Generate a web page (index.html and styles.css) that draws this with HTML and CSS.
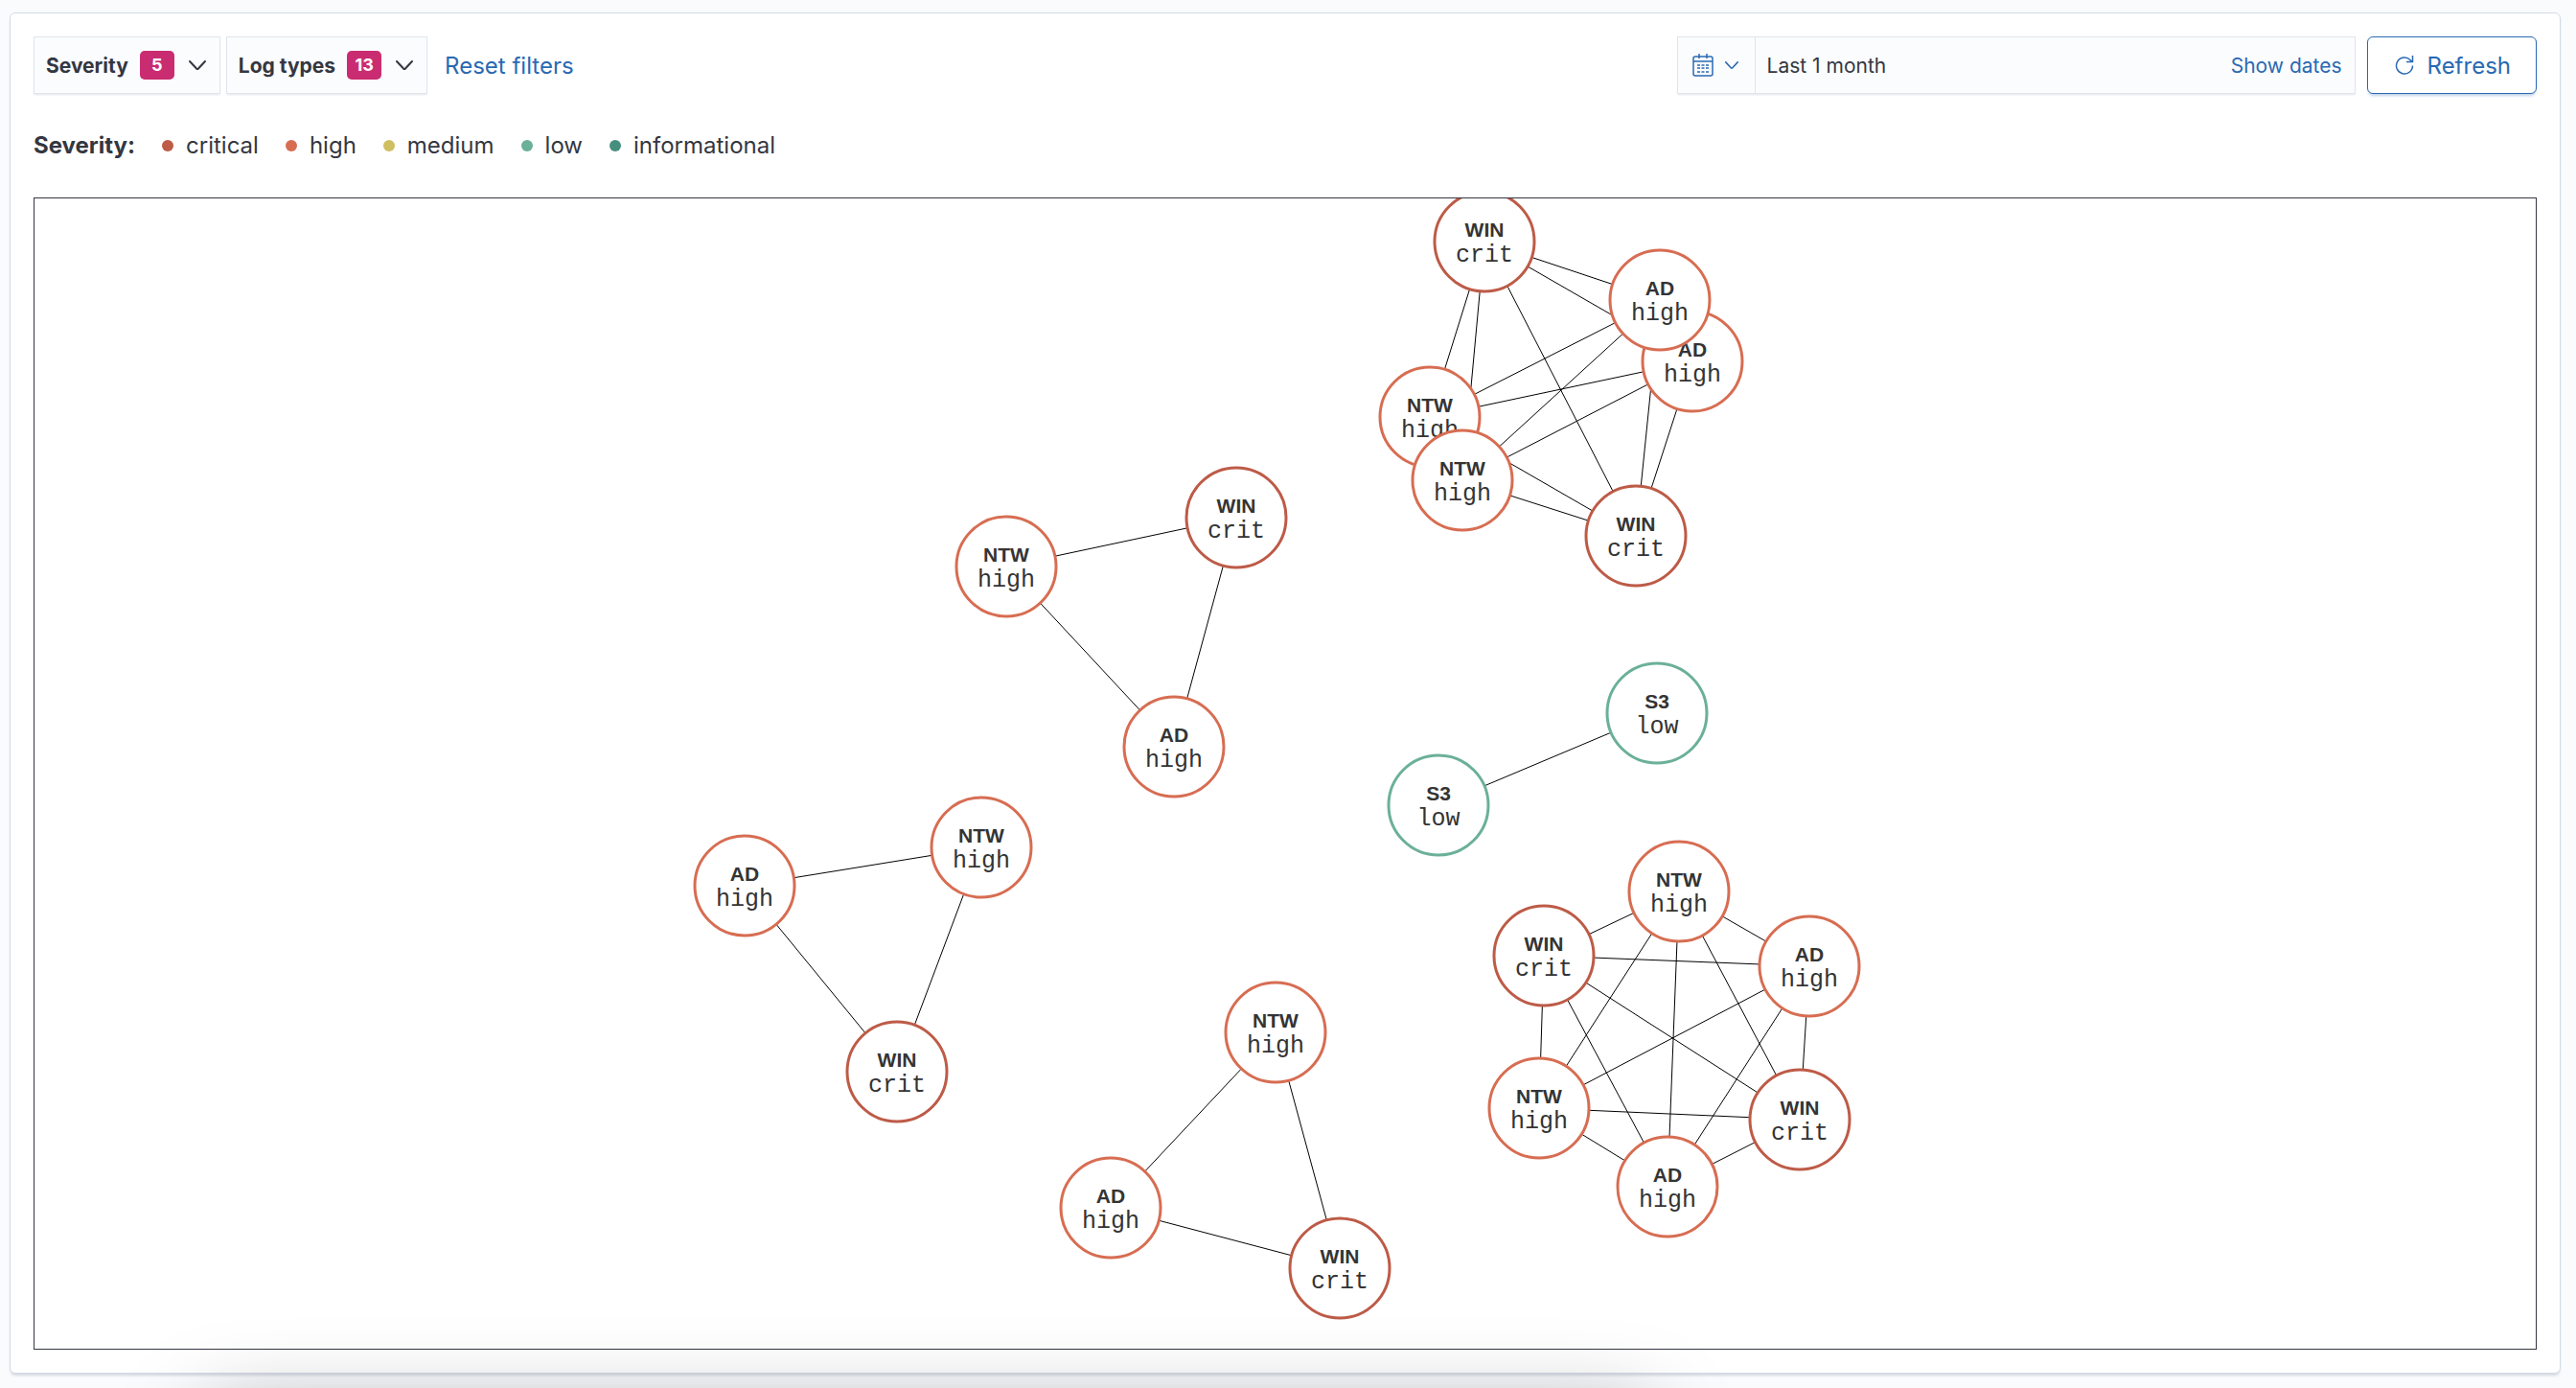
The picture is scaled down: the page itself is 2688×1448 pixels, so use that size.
FILE: index.html
```
<!DOCTYPE html>
<html lang="en">
<head>
    <meta charset="UTF-8">
    <meta name="viewport" content="width=device-width, initial-scale=1.0">
    <title>Correlations</title>
    <link rel="stylesheet" href="styles.css">
</head>
<body>

    <main class="panel">
        <div class="toolbar">
            <div class="filters">
                <button type="button" class="filter-button">
                    Severity <span class="badge">5</span>
                    <svg class="chevron" viewBox="0 0 18 12"><path d="M1 2l7 7.500q1 1 2 0l7-7.500"/></svg>
                </button>
                <button type="button" class="filter-button">
                    Log types <span class="badge">13</span>
                    <svg class="chevron" viewBox="0 0 18 12"><path d="M1 2l7 7.500q1 1 2 0l7-7.500"/></svg>
                </button>
                <button type="button" class="link-button reset">Reset filters</button>
            </div>
            <div class="time">
                <div class="date-picker">
                    <button type="button" class="quick-select" aria-label="Date quick select">
                        <svg class="calendar" viewBox="0 0 22 24">
                            <rect x="1" y="3" width="20" height="20" rx="2"/>
                            <path d="M1 8h20M7 0v5M15 0v5"/>
                            <path class="days" d="M5 12h12M5 15h12M5 19h12"/>
                        </svg>
                        <svg class="chevron small" viewBox="0 0 18 12"><path d="M1 2l7 7.500q1 1 2 0l7-7.500"/></svg>
                    </button>
                    <button type="button" class="range">Last 1 month</button>
                    <button type="button" class="link-button show-dates">Show dates</button>
                </div>
                <button type="button" class="refresh-button">
                    <svg class="refresh-icon" viewBox="0 0 20 20"><path d="M18.500 10.500A8.500 8.500 0 1 1 16 4.500L18 6.500M18.500 0v6.500H12"/></svg>
                    Refresh
                </button>
            </div>
        </div>

        <div class="legend">
            <strong>Severity:</strong>
            <span class="legend-item critical">critical</span>
            <span class="legend-item high">high</span>
            <span class="legend-item medium">medium</span>
            <span class="legend-item low">low</span>
            <span class="legend-item informational">informational</span>
        </div>

        <div class="graph">
            <svg viewBox="0 0 2610 1200">
                <g class="edges">
                    <path d="M1513 45L1696 106M1513 45L1730 170M1513 45L1456 228M1513 45L1490 294M1513 45L1671 352"/>
                    <path d="M1696 106L1730 170M1696 106L1456 228M1696 106L1490 294M1696 106L1671 352"/>
                    <path d="M1730 170L1456 228M1730 170L1490 294M1730 170L1671 352"/>
                    <path d="M1456 228L1490 294M1456 228L1671 352M1490 294L1671 352"/>
                    <path d="M1014 384L1254 333L1189 572Z"/>
                    <path d="M1465 633L1693 537"/>
                    <path d="M741 717L988 677L900 911Z"/>
                    <path d="M1295 870L1123 1053L1362 1116Z"/>
                    <path d="M1716 723L1852 801M1716 723L1842 961M1716 723L1704 1031M1716 723L1570 949M1716 723L1575 790"/>
                    <path d="M1852 801L1842 961M1852 801L1704 1031M1852 801L1570 949M1852 801L1575 790"/>
                    <path d="M1842 961L1704 1031M1842 961L1570 949M1842 961L1575 790"/>
                    <path d="M1704 1031L1570 949M1704 1031L1575 790M1570 949L1575 790"/>
                </g>

                <g class="node critical" transform="translate(1513 45)"><circle r="52"/><text class="type" y="-5">WIN</text><text class="level" y="21">crit</text></g>
                <g class="node high" transform="translate(1730 170)"><circle r="52"/><text class="type" y="-5">AD</text><text class="level" y="21">high</text></g>
                <g class="node high" transform="translate(1696 106)"><circle r="52"/><text class="type" y="-5">AD</text><text class="level" y="21">high</text></g>
                <g class="node high" transform="translate(1456 228)"><circle r="52"/><text class="type" y="-5">NTW</text><text class="level" y="21">high</text></g>
                <g class="node high" transform="translate(1490 294)"><circle r="52"/><text class="type" y="-5">NTW</text><text class="level" y="21">high</text></g>
                <g class="node critical" transform="translate(1671 352)"><circle r="52"/><text class="type" y="-5">WIN</text><text class="level" y="21">crit</text></g>

                <g class="node high" transform="translate(1014 384)"><circle r="52"/><text class="type" y="-5">NTW</text><text class="level" y="21">high</text></g>
                <g class="node critical" transform="translate(1254 333)"><circle r="52"/><text class="type" y="-5">WIN</text><text class="level" y="21">crit</text></g>
                <g class="node high" transform="translate(1189 572)"><circle r="52"/><text class="type" y="-5">AD</text><text class="level" y="21">high</text></g>

                <g class="node low" transform="translate(1465 633)"><circle r="52"/><text class="type" y="-5">S3</text><text class="level" y="21">low</text></g>
                <g class="node low" transform="translate(1693 537)"><circle r="52"/><text class="type" y="-5">S3</text><text class="level" y="21">low</text></g>

                <g class="node high" transform="translate(741 717)"><circle r="52"/><text class="type" y="-5">AD</text><text class="level" y="21">high</text></g>
                <g class="node high" transform="translate(988 677)"><circle r="52"/><text class="type" y="-5">NTW</text><text class="level" y="21">high</text></g>
                <g class="node critical" transform="translate(900 911)"><circle r="52"/><text class="type" y="-5">WIN</text><text class="level" y="21">crit</text></g>

                <g class="node high" transform="translate(1295 870)"><circle r="52"/><text class="type" y="-5">NTW</text><text class="level" y="21">high</text></g>
                <g class="node high" transform="translate(1123 1053)"><circle r="52"/><text class="type" y="-5">AD</text><text class="level" y="21">high</text></g>
                <g class="node critical" transform="translate(1362 1116)"><circle r="52"/><text class="type" y="-5">WIN</text><text class="level" y="21">crit</text></g>

                <g class="node high" transform="translate(1716 723)"><circle r="52"/><text class="type" y="-5">NTW</text><text class="level" y="21">high</text></g>
                <g class="node high" transform="translate(1852 801)"><circle r="52"/><text class="type" y="-5">AD</text><text class="level" y="21">high</text></g>
                <g class="node critical" transform="translate(1842 961)"><circle r="52"/><text class="type" y="-5">WIN</text><text class="level" y="21">crit</text></g>
                <g class="node high" transform="translate(1704 1031)"><circle r="52"/><text class="type" y="-5">AD</text><text class="level" y="21">high</text></g>
                <g class="node high" transform="translate(1570 949)"><circle r="52"/><text class="type" y="-5">NTW</text><text class="level" y="21">high</text></g>
                <g class="node critical" transform="translate(1575 790)"><circle r="52"/><text class="type" y="-5">WIN</text><text class="level" y="21">crit</text></g>
            </svg>
        </div>
    </main>

    <div class="bottom-shadow"></div>

</body>
</html>
```
FILE: styles.css
```
* {
    box-sizing: border-box;
}
body {
    margin: 0;
    padding: 13px 16px 15px 10px;
    background: #fafbfd;
    color: #343741;
    font-family: Inter, sans-serif;
    font-size: 24px;
    line-height: 36px;
    overflow: hidden;
}
button {
    margin: 0;
    padding: 0;
    border: none;
    background: none;
    color: inherit;
    font-family: inherit;
    cursor: pointer;
}
svg {
    display: block;
    fill: none;
}
.panel {
    display: flex;
    flex-direction: column;
    gap: 36px;
    padding: 24px;
    background: #fff;
    border: 1px solid #d3dae6;
    border-radius: 6px;
    box-shadow: 0 3px 3px -1px rgba(152, 162, 179, 0.4);
}
.toolbar,
.filters,
.time,
.date-picker,
.quick-select,
.filter-button,
.refresh-button,
.legend,
.legend-item {
    display: flex;
    align-items: center;
}
.toolbar {
    justify-content: space-between;
}
.filters {
    gap: 6px;
}
.filter-button {
    height: 60px;
    padding: 0 14px 0 12px;
    gap: 12px;
    background: #fbfcfd;
    border: 1px solid #e0e4ed;
    box-shadow: 0 2px 2px -1px rgba(152, 162, 179, 0.3);
    font-size: 21px;
    font-weight: 700;
}
.badge {
    width: 36px;
    border-radius: 5px;
    background: #ca2c71;
    color: #fff;
    font-size: 18px;
    line-height: 30px;
    text-align: center;
}
.chevron {
    width: 18px;
    height: 12px;
    margin-left: 3px;
    stroke: currentColor;
    stroke-width: 2;
    stroke-linecap: round;
}
.chevron.small {
    width: 14px;
    height: 10px;
    margin: 0;
}
.link-button,
.quick-select,
.refresh-button {
    color: #2a69b2;
}
.reset {
    margin-left: 12px;
    font-size: 24px;
}
.time {
    gap: 12px;
}
.date-picker {
    width: 708px;
    height: 60px;
    background: #fbfcfd;
    border: 1px solid #e0e4ed;
    box-shadow: 0 2px 2px -1px rgba(152, 162, 179, 0.3);
}
.quick-select {
    height: 100%;
    padding: 0 17px 0 15px;
    gap: 12px;
    border-right: 1px solid #e0e4ed;
}
.calendar {
    width: 22px;
    height: 24px;
    stroke: currentColor;
    stroke-width: 1.5;
}
.calendar .days {
    stroke-dasharray: 3 1.5;
}
.range {
    flex: 1;
    padding-left: 12px;
    font-size: 21px;
    text-align: left;
}
.show-dates {
    padding-right: 13px;
    font-size: 21px;
}
.refresh-button {
    height: 60px;
    padding: 0 26px 0 28px;
    gap: 14px;
    background: #fff;
    border: 1px solid #2a69b2;
    border-radius: 6px;
    box-shadow: 0 3px 3px -1px rgba(42, 105, 178, 0.3);
    font-size: 24px;
}
.refresh-icon {
    width: 20px;
    height: 20px;
    stroke: currentColor;
    stroke-width: 1.5;
}
.legend {
    gap: 28px;
}
.legend-item {
    gap: 13px;
}
.legend-item::before {
    content: "";
    width: 12px;
    height: 12px;
    border-radius: 50%;
    background: var(--severity);
}
.critical {
    --severity: #bd5b47;
}
.high {
    --severity: #d76d52;
}
.medium {
    --severity: #d0bf62;
}
.low {
    --severity: #6bb098;
}
.informational {
    --severity: #468f7e;
}
.graph {
    border: 1px solid #343741;
}
.graph svg {
    width: 100%;
    height: auto;
}
.edges {
    stroke: #000;
    stroke-width: 1;
}
.node circle {
    fill: #fff;
    stroke: var(--severity);
    stroke-width: 3;
}
.node text {
    fill: #343434;
    text-anchor: middle;
}
.node .type {
    font-family: "Liberation Sans", Arial, sans-serif;
    font-size: 21px;
    font-weight: 700;
}
.node .level {
    font-family: "Courier New", "Liberation Mono", monospace;
    font-size: 25px;
}
/* soft shadow rising from below the window */
.bottom-shadow {
    position: fixed;
    top: calc(100% + 27px);
    left: 8%;
    right: 36%;
    height: 200px;
    box-shadow: 0 0 90px rgba(0, 0, 0, 0.35);
    pointer-events: none;
}
```
